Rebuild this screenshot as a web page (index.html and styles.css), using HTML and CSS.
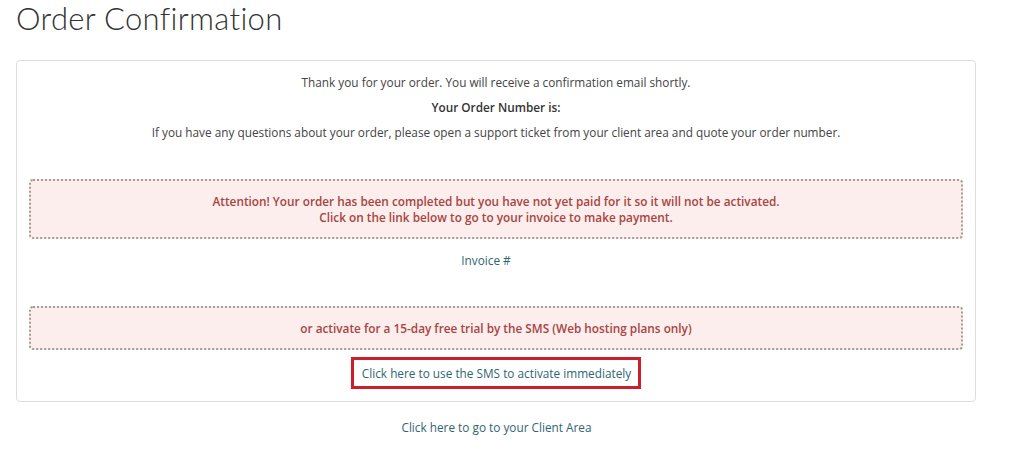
FILE: index.html
```html
<!DOCTYPE html>
<html lang="en">
<head>
    <meta charset="UTF-8">
    <title>Order Confirmation</title>
    <link rel="stylesheet" href="styles.css">
</head>
<body>
    <h1 class="page-title">Order Confirmation</h1>

    <div class="panel">
        <p>Thank you for your order. You will receive a confirmation email shortly.</p>
        <p class="order-number">Your Order Number is:</p>
        <p>If you have any questions about your order, please open a support ticket from your client area and quote your order number.</p>

        <div class="alert alert-first">
            Attention! Your order has been completed but you have not yet paid for it so it will not be activated.<br>
            Click on the link below to go to your invoice to make payment.
        </div>

        <p class="invoice"><a href="#">Invoice #</a><span class="invoice-num"></span></p>

        <div class="alert alert-second">
            or activate for a 15-day free trial by the SMS (Web hosting plans only)
        </div>

        <div class="sms-row">
            <a href="#" class="sms-link">Click here to use the SMS to activate immediately</a>
        </div>
    </div>

    <p class="client-area"><a href="#">Click here to go to your Client Area</a></p>
</body>
</html>
```

FILE: styles.css
```css
body {
    margin: 0;
    padding: 0 48px 0 16px;
    font-family: 'Open Sans', sans-serif;
    font-size: 11.8px;
    color: #444;
    background: #fff;
}
a {
    color: #2f6573;
    text-decoration: none;
}
.page-title {
    margin: 0;
    padding-top: 0;
    font-family: 'Lato', sans-serif;
    font-weight: 300;
    font-size: 31px;
    letter-spacing: 0.3px;
    line-height: 37px;
    color: #333;
}
.panel {
    margin-top: 23px;
    border: 1px solid #ddd;
    border-radius: 4px;
    padding: 12px 12px 12px;
    text-align: center;
}
.panel p {
    margin: 0 0 6px;
    line-height: 19px;
}
.order-number {
    font-weight: 600;
    color: #333;
}
.alert {
    margin: 37px 0 0;
    border: 2px dotted #a99;
    border-radius: 4px;
    background: #fbeeed;
    color: #a94442;
    font-weight: 600;
    line-height: 16px;
    padding: 12px 10px;
}
.alert-second {
    margin-top: 36px;
    padding: 12px 10px;
}
.panel .invoice {
    margin: 12px 0 0;
}
.invoice-num {
    display: inline-block;
    width: 20px;
}
.sms-row {
    margin-top: 7px;
}
.sms-link {
    display: inline-block;
    border: 3px solid #c9202a;
    padding: 4px 7px 4px 8px;
    line-height: 18px;
}
.client-area {
    margin: 17px 0 0;
    text-align: center;
    padding-left: 1px;
}
```
